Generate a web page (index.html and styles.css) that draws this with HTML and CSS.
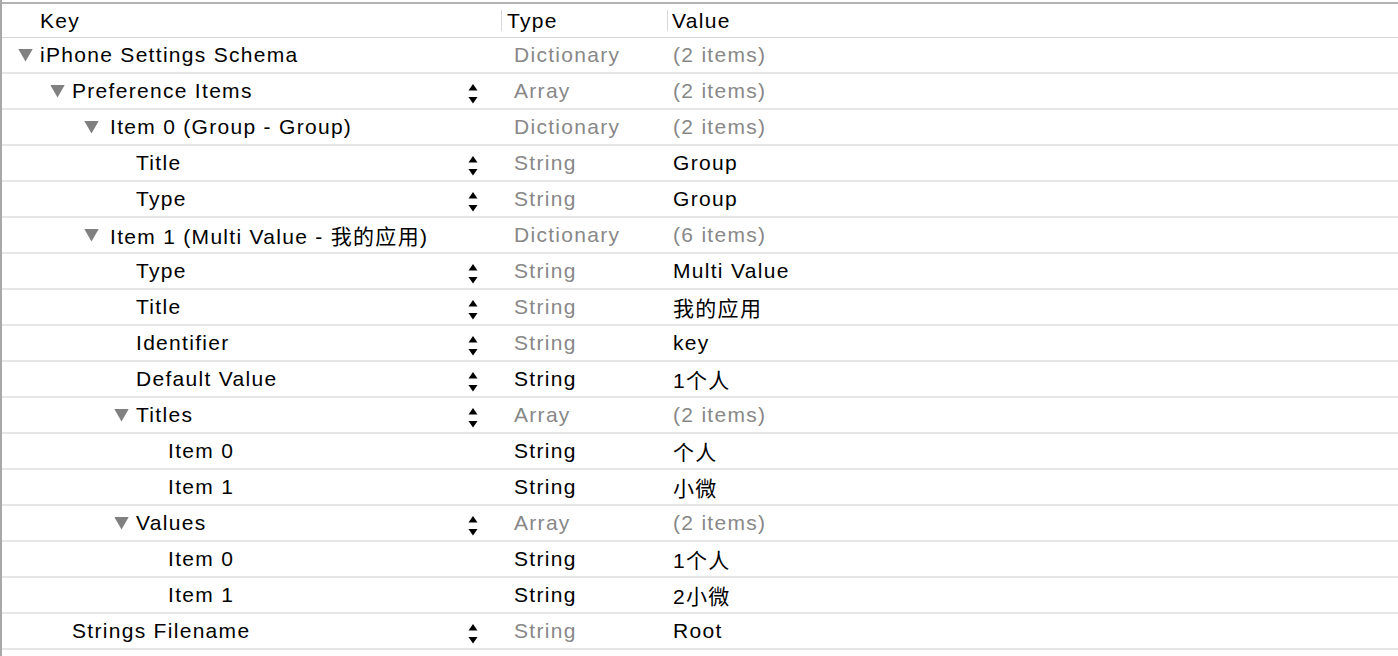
FILE: index.html
```html
<!DOCTYPE html>
<html lang="en">
<head>
  <meta charset="UTF-8" />
  <title>Root.plist</title>
  <link rel="stylesheet" href="styles.css">
</head>
<body>
  <div class="plist">
    <!-- column headers -->
    <div class="head">
      <div class="hkey">Key</div>
      <div class="htype">Type</div>
      <div class="hvalue">Value</div>
    </div>

    <div class="row">
      <div class="key l0"><span class="tri"></span><span class="name">iPhone Settings Schema</span></div>
      <div class="type dim">Dictionary</div>
      <div class="value dim">(2 items)</div>
    </div>
    <div class="row">
      <div class="key l1"><span class="tri"></span><span class="name">Preference Items</span><span class="step"></span></div>
      <div class="type dim">Array</div>
      <div class="value dim">(2 items)</div>
    </div>
    <div class="row">
      <div class="key l2"><span class="tri wide"></span><span class="name">Item 0 (Group - Group)</span></div>
      <div class="type dim">Dictionary</div>
      <div class="value dim">(2 items)</div>
    </div>
    <div class="row">
      <div class="key l3"><span class="name">Title</span><span class="step"></span></div>
      <div class="type dim">String</div>
      <div class="value">Group</div>
    </div>
    <div class="row">
      <div class="key l3"><span class="name">Type</span><span class="step"></span></div>
      <div class="type dim">String</div>
      <div class="value">Group</div>
    </div>
    <div class="row">
      <div class="key l2"><span class="tri wide"></span><span class="name">Item 1 (Multi Value - 我的应用)</span></div>
      <div class="type dim">Dictionary</div>
      <div class="value dim">(6 items)</div>
    </div>
    <div class="row">
      <div class="key l3"><span class="name">Type</span><span class="step"></span></div>
      <div class="type dim">String</div>
      <div class="value">Multi Value</div>
    </div>
    <div class="row">
      <div class="key l3"><span class="name">Title</span><span class="step"></span></div>
      <div class="type dim">String</div>
      <div class="value">我的应用</div>
    </div>
    <div class="row">
      <div class="key l3"><span class="name">Identifier</span><span class="step"></span></div>
      <div class="type dim">String</div>
      <div class="value">key</div>
    </div>
    <div class="row">
      <div class="key l3"><span class="name">Default Value</span><span class="step"></span></div>
      <div class="type">String</div>
      <div class="value">1个人</div>
    </div>
    <div class="row">
      <div class="key l3"><span class="tri"></span><span class="name">Titles</span><span class="step"></span></div>
      <div class="type dim">Array</div>
      <div class="value dim">(2 items)</div>
    </div>
    <div class="row">
      <div class="key l4"><span class="name">Item 0</span></div>
      <div class="type">String</div>
      <div class="value">个人</div>
    </div>
    <div class="row">
      <div class="key l4"><span class="name">Item 1</span></div>
      <div class="type">String</div>
      <div class="value">小微</div>
    </div>
    <div class="row">
      <div class="key l3"><span class="tri"></span><span class="name">Values</span><span class="step"></span></div>
      <div class="type dim">Array</div>
      <div class="value dim">(2 items)</div>
    </div>
    <div class="row">
      <div class="key l4"><span class="name">Item 0</span></div>
      <div class="type">String</div>
      <div class="value">1个人</div>
    </div>
    <div class="row">
      <div class="key l4"><span class="name">Item 1</span></div>
      <div class="type">String</div>
      <div class="value">2小微</div>
    </div>
    <div class="row">
      <div class="key l1"><span class="name">Strings Filename</span><span class="step"></span></div>
      <div class="type dim">String</div>
      <div class="value">Root</div>
    </div>
  </div>

  <script>
    // draw the little up/down steppers
    document.querySelectorAll('.step').forEach(s => {
      s.innerHTML = '<svg width="10" height="22" viewBox="0 0 10 22">' +
        '<path d="M5 0 L9.5 6.5 L0.5 6.5 Z" fill="#000"/>' +
        '<path d="M0.5 13 L9.5 13 L5 19.5 Z" fill="#000"/></svg>';
    });
  </script>
</body>
</html>
```

FILE: styles.css
```css
body { margin: 0; background: #fff; font-family: "Liberation Sans", Arial, "Noto Sans CJK SC", sans-serif; font-size: 21px; letter-spacing: 1.3px; color: #000; }
.plist { border-left: 2px solid #a8a8a8; padding-top: 2px; min-height: 654px; }

.head { display: flex; align-items: center; height: 33px; border-top: 2px solid #b2b2b2; border-bottom: 1px solid #d6d6d6; }
.hkey { width: 461px; padding-left: 38px; }
.htype { width: 160px; padding-left: 5px; border-left: 1px solid #d9d9d9; line-height: 21px; }
.hvalue { padding-left: 4px; border-left: 1px solid #d9d9d9; line-height: 21px; }

.row { display: flex; align-items: center; height: 34px; border-bottom: 2px solid #e6e6e6; }
.key { display: flex; align-items: center; width: 499px; box-sizing: border-box; height: 100%; }
.name { flex: 1; white-space: nowrap; }
.type { width: 153px; padding-left: 13px; }
.value { padding-left: 6px; }
.dim { color: #888; }

.l0 { padding-left: 38px; }
.l1 { padding-left: 70px; }
.l2 { padding-left: 108px; }
.l3 { padding-left: 134px; }
.l4 { padding-left: 166px; }

.tri { width: 15px; height: 13px; margin-left: -22px; margin-right: 7px; background: #808080; clip-path: polygon(0 0, 100% 0, 50% 100%); flex: none; }
.tri.wide { margin-left: -26px; margin-right: 11px; }

.step { width: 10px; height: 22px; margin-right: 23px; margin-top: 8px; flex: none; }
.step svg { display: block; }
```
